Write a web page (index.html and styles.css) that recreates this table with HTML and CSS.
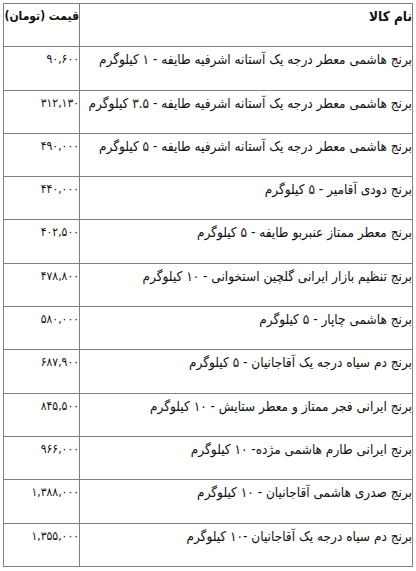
FILE: index.html
```html
<!DOCTYPE html>
<html lang="fa" dir="rtl">
<head>
<meta charset="utf-8">
<title>قیمت برنج</title>
<link rel="stylesheet" href="styles.css">
</head>
<body>
<table class="prices">
  <thead>
    <tr><th class="name">نام کالا</th><th class="price">قیمت (تومان)</th></tr>
  </thead>
  <tbody>
    <tr><td class="name">برنج هاشمی معطر درجه یک آستانه اشرفیه طایفه - ۱ کیلوگرم</td><td class="price">۹۰,۶۰۰</td></tr>
    <tr><td class="name">برنج هاشمی معطر درجه یک آستانه اشرفیه طایفه - ۳.۵ کیلوگرم</td><td class="price">۳۱۲,۱۳۰</td></tr>
    <tr><td class="name">برنج هاشمی معطر درجه یک آستانه اشرفیه طایفه - ۵ کیلوگرم</td><td class="price">۴۹۰,۰۰۰</td></tr>
    <tr><td class="name">برنج دودی آقامیر - ۵ کیلوگرم</td><td class="price">۴۴۰,۰۰۰</td></tr>
    <tr><td class="name">برنج معطر ممتاز عنبربو طایفه - ۵ کیلوگرم</td><td class="price">۴۰۲,۵۰۰</td></tr>
    <tr><td class="name">برنج تنظیم بازار ایرانی گلچین استخوانی - ۱۰ کیلوگرم</td><td class="price">۴۷۸,۸۰۰</td></tr>
    <tr><td class="name">برنج هاشمی چاپار - ۵ کیلوگرم</td><td class="price">۵۸۰,۰۰۰</td></tr>
    <tr><td class="name">برنج دم سیاه درجه یک آقاجانیان - ۵ کیلوگرم</td><td class="price">۶۸۷,۹۰۰</td></tr>
    <tr><td class="name">برنج ایرانی فجر ممتاز و معطر ستایش - ۱۰ کیلوگرم</td><td class="price">۸۴۵,۵۰۰</td></tr>
    <tr><td class="name">برنج ایرانی طارم هاشمی مژده- ۱۰ کیلوگرم</td><td class="price">۹۶۶,۰۰۰</td></tr>
    <tr><td class="name">برنج صدری هاشمی آقاجانیان - ۱۰ کیلوگرم</td><td class="price">۱,۳۸۸,۰۰۰</td></tr>
    <tr><td class="name">برنج دم سیاه درجه یک آقاجانیان -۱۰ کیلوگرم</td><td class="price">۱,۳۵۵,۰۰۰</td></tr>
  </tbody>
</table>
</body>
</html>
```
FILE: styles.css
```css
html, body {
  background: #ffffff;
}
body {
  margin: 3px;
  font-family: "DejaVu Sans Condensed", "DejaVu Sans", sans-serif;
  font-stretch: condensed;
  font-size: 13.5px;
  color: #111111;
}
.prices {
  width: 410px;
  border-collapse: collapse;
  table-layout: fixed;
}
.prices tr {
  height: 43.3px;
}
.prices th,
.prices td {
  border: 1px solid #808080;
  vertical-align: top;
  text-align: right;
  padding: 3px 0 0 0;
  line-height: 18px;
  white-space: nowrap;
}
.prices th {
  font-weight: bold;
}
.prices .price {
  width: 75px;
  font-size: 12px;
}
.prices th.price {
  font-size: 12px;
}
```
